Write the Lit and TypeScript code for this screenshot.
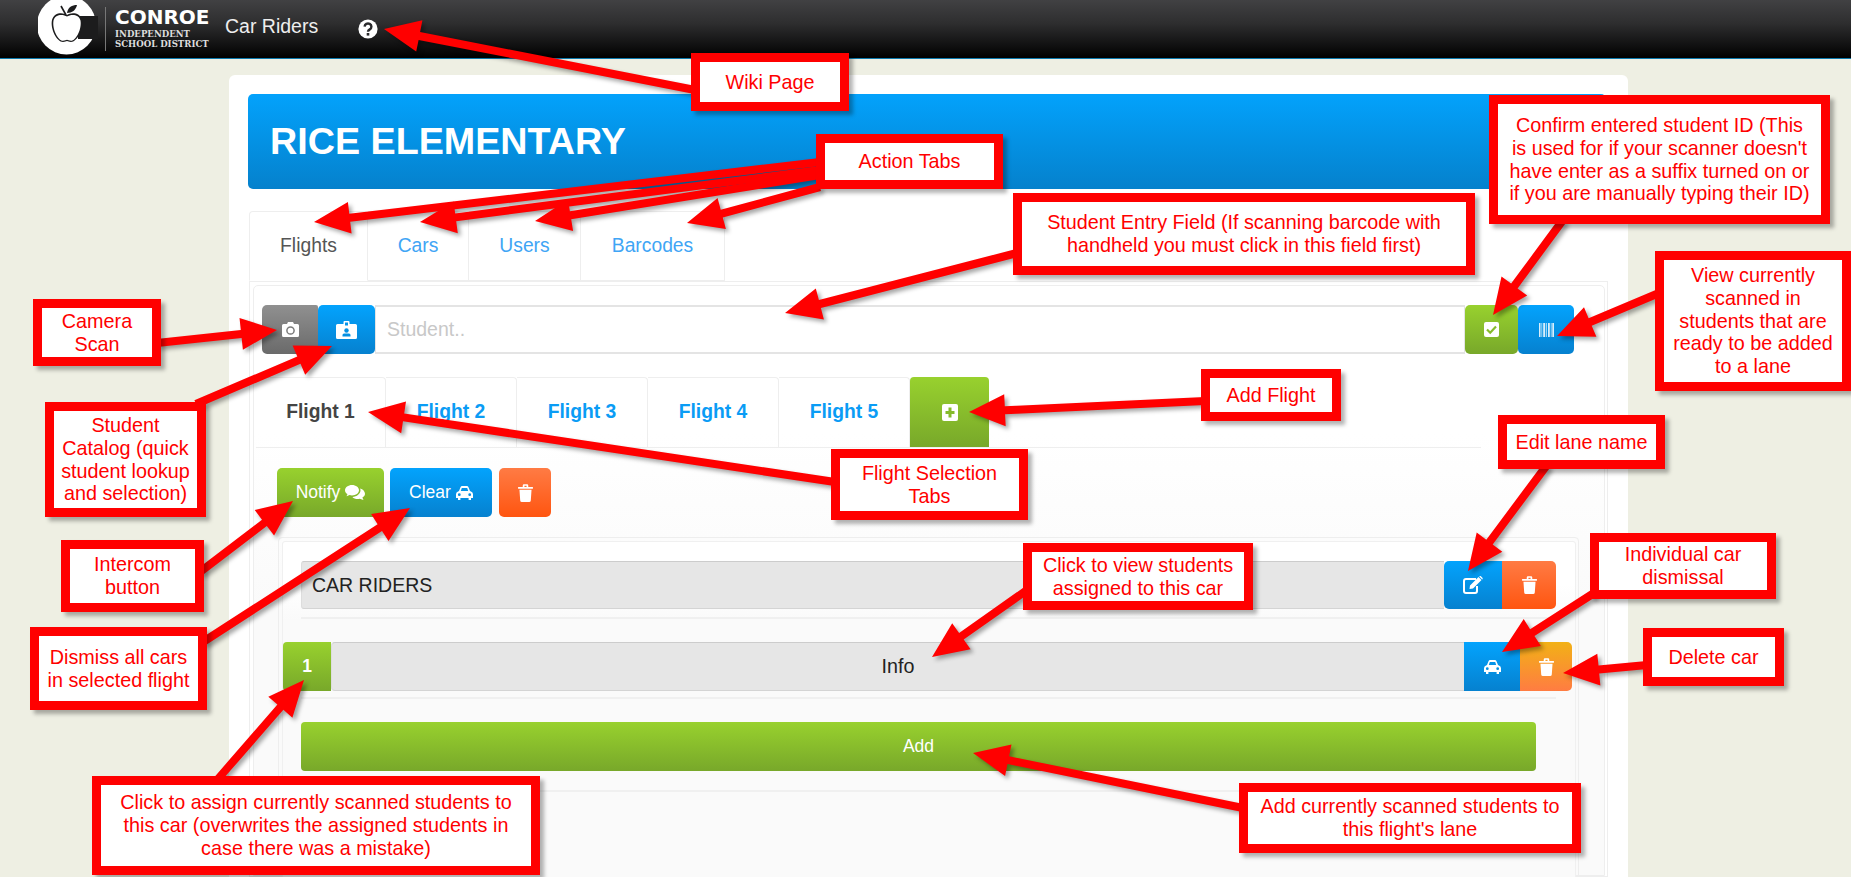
import { LitElement, html, css, svg } from "lit";
import { customElement } from "lit/decorators.js";

type Box = { x: number; y: number; r: number; b: number; lines: string[] };
const boxes: Box[] = [
  { x: 691, y: 53, r: 849, b: 111, lines: ["Wiki Page"] },
  { x: 816, y: 134, r: 1003, b: 189, lines: ["Action Tabs"] },
  { x: 1013, y: 193, r: 1475, b: 275, lines: ["Student Entry Field (If scanning barcode with", "handheld you must click in this field first)"] },
  { x: 1489, y: 95, r: 1830, b: 224, lines: ["Confirm entered student ID (This", "is used for if your scanner doesn't", "have enter as a suffix turned on or", "if you are manually typing their ID)"] },
  { x: 1655, y: 251, r: 1851, b: 391, lines: ["View currently", "scanned in", "students that are", "ready to be added", "to a lane"] },
  { x: 33, y: 299, r: 161, b: 366, lines: ["Camera", "Scan"] },
  { x: 45, y: 402, r: 206, b: 517, lines: ["Student", "Catalog (quick", "student lookup", "and selection)"] },
  { x: 61, y: 540, r: 204, b: 612, lines: ["Intercom", "button"] },
  { x: 30, y: 627, r: 207, b: 710, lines: ["Dismiss all cars", "in selected flight"] },
  { x: 92, y: 776, r: 540, b: 875, lines: ["Click to assign currently scanned students to", "this car (overwrites the assigned students in", "case there was a mistake)"] },
  { x: 831, y: 449, r: 1028, b: 520, lines: ["Flight Selection", "Tabs"] },
  { x: 1201, y: 369, r: 1341, b: 421, lines: ["Add Flight"] },
  { x: 1023, y: 543, r: 1253, b: 610, lines: ["Click to view students", "assigned to this car"] },
  { x: 1239, y: 783, r: 1581, b: 853, lines: ["Add currently scanned students to", "this flight's lane"] },
  { x: 1498, y: 415, r: 1665, b: 469, lines: ["Edit lane name"] },
  { x: 1590, y: 533, r: 1776, b: 599, lines: ["Individual car", "dismissal"] },
  { x: 1643, y: 628, r: 1784, b: 686, lines: ["Delete car"] },
];

const arrows: number[][] = [
  [695, 90, 384, 29],
  [820, 162, 314, 222],
  [820, 170, 420, 222],
  [820, 175, 535, 221],
  [820, 187, 687, 223],
  [1017, 253, 785, 313],
  [1563, 220, 1493, 315],
  [1659, 293, 1557, 336],
  [157, 343, 277, 330],
  [196, 404, 332, 346],
  [200, 572, 293, 501],
  [203, 642, 410, 508],
  [835, 482, 368, 412],
  [1205, 401, 969, 412],
  [1547, 465, 1468, 571],
  [1027, 590, 932, 657],
  [1594, 593, 1502, 652],
  [1647, 665, 1563, 673],
  [217, 780, 304, 680],
  [1243, 808, 973, 753],
];

function arrowPoints([x1, y1, x2, y2]: number[]) {
  const dx = x2 - x1, dy = y2 - y1;
  const len = Math.hypot(dx, dy);
  const ux = dx / len, uy = dy / len;
  const nx = -uy, ny = ux;
  const w = 4, W = 16, L = 36;
  const bx = x2 - ux * L, by = y2 - uy * L;
  const p = [
    [x1 + nx * w, y1 + ny * w],
    [bx + nx * w, by + ny * w],
    [bx + nx * W, by + ny * W],
    [x2, y2],
    [bx - nx * W, by - ny * W],
    [bx - nx * w, by - ny * w],
    [x1 - nx * w, y1 - ny * w],
  ];
  return p.map((q) => q[0].toFixed(1) + "," + q[1].toFixed(1)).join(" ");
}

const camera = html`<svg width="17" height="15" viewBox="0 0 17 15"><path fill="#fff" d="M5 2 6 0H11L12 2H15.5A1.5 1.5 0 0 1 17 3.5V13.5A1.5 1.5 0 0 1 15.5 15H1.5A1.5 1.5 0 0 1 0 13.5V3.5A1.5 1.5 0 0 1 1.5 2Z"/><circle cx="8.5" cy="8.5" r="3.6" fill="none" stroke="#7b7b7b" stroke-width="1.5"/></svg>`;
const idCard = html`<svg width="21" height="18" viewBox="0 0 21 18"><path fill="#fff" d="M1.5 3H7.5V1Q7.5 0 8.5 0H12.5Q13.5 0 13.5 1V3H19.5Q21 3 21 4.5V16.5Q21 18 19.5 18H1.5Q0 18 0 16.5V4.5Q0 3 1.5 3Z"/><rect x="9" y="1.5" width="3" height="3" fill="#0595ea"/><circle cx="10.5" cy="9.5" r="2.2" fill="#0590e2"/><path fill="#0590e2" d="M6.5 15.5V14Q6.5 12.5 8 12.5H13Q14.5 12.5 14.5 14V15.5Z"/></svg>`;
const checkSquare = html`<svg width="15" height="15" viewBox="0 0 15 15"><rect width="15" height="15" rx="2" fill="#fff"/><path d="M3 7.5 6.2 10.7 12 4.5" fill="none" stroke="#86bb2c" stroke-width="2.2"/></svg>`;
const barcode = html`<svg width="15" height="14" viewBox="0 0 15 14"><path fill="#fff" opacity="0.85" d="M0 0H1.5V14H0ZM2.5 0H3.2V14H2.5ZM4.2 0H6.2V14H4.2ZM7.2 0H7.9V14H7.2ZM9 0H10.8V14H9ZM11.8 0H12.5V14H11.8ZM13.3 0H15V14H13.3Z"/></svg>`;
const edit = html`<svg width="20" height="18" viewBox="0 0 20 18"><path fill="none" stroke="#fff" stroke-width="2" d="M13 3H3Q1 3 1 5V15Q1 17 3 17H12Q14 17 14 15V10"/><path fill="#fff" d="M7 9.5 15.5 1 18.5 4 10 12.5 6.5 13ZM16.5 0.2Q17.2-.3 17.9.3L19.4 1.8Q20 2.5 19.5 3.2L19.2 3.4 16.2.4Z"/></svg>`;
const trash = html`<svg width="15" height="18" viewBox="0 0 14 17"><path fill="#fff" d="M0 2.8H4.4V1.4Q4.4 .3 5.5 .3H8.5Q9.6 .3 9.6 1.4V2.8H14V4.4H0ZM6 1.6V2.8H8V1.6ZM1.3 5.4H12.7L12 15.5Q11.9 17 10.4 17H3.6Q2.1 17 2 15.5Z"/></svg>`;
const car = html`<svg width="17" height="14" viewBox="0 0 17 14"><path fill="#fff" fill-rule="evenodd" d="M3 5 4.5 1.2Q4.9 0 6.2 0H10.8Q12.1 0 12.5 1.2L14 5Q17 6 17 8V12H15V14H12.6V12H4.4V14H2V12H0V8Q0 6 3 5ZM4.8 5H12.2L11.2 2H5.8ZM3.3 7.3A1.4 1.4 0 1 0 3.3 10.1 1.4 1.4 0 1 0 3.3 7.3ZM13.7 7.3A1.4 1.4 0 1 0 13.7 10.1 1.4 1.4 0 1 0 13.7 7.3Z"/></svg>`;
const comments = html`<svg width="20" height="15" viewBox="0 0 20 15"><path fill="#fff" d="M7 0C3.2 0 0 2.3 0 5.2 0 6.8 1 8.2 2.5 9.1L1.5 11.3 4.6 10C5.4 10.3 6.2 10.4 7 10.4 10.9 10.4 14 8.1 14 5.2S10.9 0 7 0Z"/><path fill="#fff" d="M15.1 3.4C15.4 4 15.5 4.6 15.5 5.2 15.5 8.8 11.9 11.6 7.4 11.9 8.6 13.2 10.5 14 12.6 14 13.3 14 14 13.9 14.7 13.7L18.5 15 17.4 12.6C18.9 11.7 20 10.4 20 8.8 20 6.4 18 4.2 15.1 3.4Z"/></svg>`;
const plus = html`<svg width="16" height="17" viewBox="0 0 16 17"><rect width="16" height="17" rx="2" fill="#fff"/><path d="M8 3.5V13.5M3.5 8.5H12.5" stroke="#86bb2c" stroke-width="3"/></svg>`;
const help = html`<svg width="20" height="20" viewBox="0 0 20 20"><circle cx="10" cy="10" r="9.6" fill="#fff"/><path d="M6.6 7.6A3.4 3.2 0 1 1 11.8 10.4C10.6 11.1 10 11.6 10 12.8" fill="none" stroke="#2a2a2c" stroke-width="2.4"/><rect x="8.7" y="14" width="2.6" height="2.6" fill="#2a2a2c"/></svg>`;
const apple = html`<svg class="mark" width="60" height="58" viewBox="0 0 60 58">
  <circle cx="28.5" cy="27" r="29.5" fill="#fff"/>
  <rect x="40" y="18" width="20" height="23" fill="#1c1c1d"/>
  <path fill="#1c1c1d" d="M29 17C25 14 16 14 14 22 12 31 19 44 25 44 27 44 28 43 29 43 30 43 31 44 33 44 39 44 46 31 44 22 42 14 33 14 29 17Z"/>
  <path fill="#fff" d="M29 18.500C25 16 17 16 15.500 22.500 14 31 20 42.800 25 42.800 27 42.800 28 41.800 29 41.800 30 41.800 31 42.800 33 42.800 38 42.800 44 31 42.500 22.500 41 16 33 16 29 18.500Z"/>
  <path fill="none" stroke="#1c1c1d" stroke-width="1.6" d="M28 17 23 8"/>
  <path fill="#1c1c1d" d="M29 15C30 9 34 7 39 7 38 12 34 15 29 15Z"/>
</svg>`;

@customElement("app-root")
export class AppRoot extends LitElement {
  static styles = css`
    :host {
      display: block;
      position: relative;
      height: 877px;
      overflow: hidden;
      background: #eeefe3;
      font-family: "Liberation Sans", Arial, sans-serif;
      color: #333;
    }
    .topbar {
      height: 58px;
      border-bottom: 1px solid #0b79ad;
      background: linear-gradient(#414143 0%, #2e2e2f 40%, #000 100%);
      display: flex;
      align-items: center;
      padding-left: 38px;
      overflow: hidden;
    }
    .mark { flex: none; margin-top: -2px; align-self: flex-start; }
    .rule { width: 1px; height: 44px; background: #777; margin: 0 9px 0 7px; flex: none; }
    .word { width: 110px; flex: none; color: #e8e8e8; }
    .word b { display: block; font: bold 20px/17px "DejaVu Sans", sans-serif; color: #fff; margin-bottom: 3px; }
    .word span { display: block; font: bold 8.600px/10px "DejaVu Serif", serif; color: #ddd; }
    .app { color: #eee; font-size: 19.500px; margin-top: -6px; }
    .helpi { margin-left: 40px; display: flex; }
    .card {
      width: 1399px;
      margin: 16px 0 0 229px;
      background: #fff;
      border-radius: 6px 6px 0 0;
      padding-top: 19px;
      height: 802px;
      box-sizing: border-box;
    }
    .banner {
      margin-left: 19px;
      width: 1358px;
      height: 95px;
      box-sizing: border-box;
      padding-left: 22px;
      border-radius: 5px;
      display: flex;
      align-items: center;
      color: #fff;
      font-size: 37.700px;
      font-weight: bold;
      background: linear-gradient(#03a2fc, #0581cc);
    }
    .tabs { display: flex; margin: 22px 0 0 20px; height: 70px; }
    .tab {
      box-sizing: border-box;
      display: flex;
      align-items: center;
      justify-content: center;
      border: 1px solid #eee;
      border-left: 0;
      border-radius: 0 4px 0 0;
      font-size: 19.300px;
      color: #3fa5f5;
    }
    .tab.on { color: #555; border-left: 1px solid #eee; border-bottom-color: #fff; border-radius: 4px 4px 0 0; }
    .t1 { width: 119px; } .t2 { width: 101px; } .t3 { width: 112px; } .t4 { width: 144px; }
    .pane {
      margin-left: 20px;
      width: 1359px;
      height: 596px;
      box-sizing: border-box;
      border: 1px solid #eee;
      padding: 3px 2px 0 3px;
    }
    .well {
      height: 100%;
      box-sizing: border-box;
      border: 1px solid #eee;
      border-radius: 5px 5px 0 0;
      padding-top: 19px;
      background: linear-gradient(#fff 25%, #fafafa 55%);
    }
    .btn {
      display: flex;
      align-items: center;
      justify-content: center;
      gap: 5px;
      color: #fff;
      flex: none;
      font-size: 17.500px;
      box-sizing: border-box;
    }
    .blue { background: linear-gradient(#03a3fd, #0681cf); }
    .green { background: linear-gradient(#98d12e, #78a82a); }
    .grey { background: linear-gradient(#909090, #6a6a6a); }
    .orange { background: linear-gradient(#ff7b44, #ff5510); }
    .amber { background: linear-gradient(#f2b116, #ff7c42); }
    .entry { display: flex; height: 49px; margin-left: 8px; width: 1312px; }
    .w-cam { width: 56px; border-radius: 5px 2px 2px 5px; }
    .w-id { width: 57px; border-radius: 5px; }
    .student {
      flex: 1;
      min-width: 0;
      box-sizing: border-box;
      background: #fff;
      border: 1px solid #e4e4e4;
      border-width: 2px 1px;
      color: #c8c8c8;
      font-size: 19.500px;
      display: flex;
      align-items: center;
      padding-left: 11px;
    }
    .w-ok { width: 53px; border-radius: 5px; }
    .w-bar { width: 56px; border-radius: 5px; }
    .flights {
      display: flex;
      margin: 23px 0 0 2px;
      width: 1225px;
      height: 70px;
      border-bottom: 1px solid #eee;
      box-sizing: content-box;
    }
    .ft {
      box-sizing: border-box;
      display: flex;
      align-items: center;
      justify-content: center;
      border: 1px solid #eee;
      border-bottom: 0;
      border-left: 0;
      border-radius: 0 4px 0 0;
      padding-bottom: 2px;
      font-size: 19.300px;
      font-weight: bold;
      color: #0a9cf5;
      width: 131px;
    }
    .ft.on { color: #444; width: 130px; }
    .ft.add { width: 79px; border: 0; border-radius: 4px 4px 0 0; padding-bottom: 0; }
    .actions { display: flex; margin: 20px 0 0 23px; height: 49px; }
    .r5 { border-radius: 5px; }
    .w-notify { width: 107px; margin-right: 6px; }
    .w-clear { width: 102px; margin-right: 7px; }
    .w-del { width: 52px; }
    .lane {
      margin: 20px 0 0 24px;
      width: 1301px;
      height: 360px;
      box-sizing: border-box;
      border: 1px solid #eee;
      border-radius: 4px 4px 0 0;
      padding: 3px 2px 0 3px;
    }
    .laneIn {
      height: 100%;
      box-sizing: border-box;
      border: 1px solid #f0f0f0;
      border-radius: 3px 3px 0 0;
      background: linear-gradient(#fff 0, #fff 12%, #fafafa 22%);
      padding-top: 19px;
    }
    .row { display: flex; }
    .laneRow { margin-left: 18px; width: 1255px; height: 48px; }
    .bar {
      flex: 1;
      min-width: 0;
      box-sizing: border-box;
      background: #e6e6e6;
      border-top: 1px solid #ccc;
      border-bottom: 1px solid #d4d4d4;
      color: #222;
      font-size: 19.500px;
      display: flex;
      align-items: center;
    }
    .laneRow .bar { padding-left: 10px; border-left: 1px solid #ddd; border-radius: 3px 0 0 3px; }
    .w-edit { width: 58px; border-radius: 5px 0 0 5px; }
    .w-ldel { width: 54px; border-radius: 0 5px 5px 0; }
    .sep { height: 2px; background: #f0f0f0; margin-left: 18px; width: 1255px; }
    .s1 { margin-top: 8px; margin-bottom: 23px; }
    .carRow { width: 1289px; height: 49px; }
    .w-num { width: 48px; border-radius: 4px 0 0 4px; font-weight: bold; }
    .carRow .bar { justify-content: center; border-radius: 4px 0 0 4px; font-size: 19.700px; border-left: 1px solid #ddd; }
    .w-car { width: 56px; border-radius: 0; }
    .w-cdel { width: 52px; border-radius: 0 5px 5px 0; }
    .s2 { margin-top: 6px; margin-bottom: 23px; }
    .addBtn { margin-left: 18px; width: 1235px; height: 49px; border-radius: 4px; }
    .s3 { margin-top: 19px; }

    .overlay { position: absolute; left: 0; top: 0; width: 1851px; height: 877px; pointer-events: none; }
    .arrows { position: absolute; left: 0; top: 0; filter: drop-shadow(3px 3px 2px rgba(0, 0, 0, 0.35)); }
    .call {
      position: absolute;
      box-sizing: border-box;
      background: #fff;
      border: 9px solid #f00;
      box-shadow: 4px 4px 4px rgba(0, 0, 0, 0.3);
      color: #f00;
      font-size: 19.800px;
      line-height: 22.700px;
      text-align: center;
      display: flex;
      flex-direction: column;
      justify-content: center;
      white-space: nowrap;
    }
  `;

  render() {
    return html`
      <div class="topbar">
        ${apple}
        <div class="rule"></div>
        <div class="word"><b>CONROE</b><span>INDEPENDENT</span><span>SCHOOL DISTRICT</span></div>
        <div class="app">Car Riders</div>
        <div class="helpi">${help}</div>
      </div>
      <div class="card">
        <div class="banner">RICE ELEMENTARY</div>
        <div class="tabs">
          <div class="tab on t1">Flights</div>
          <div class="tab t2">Cars</div>
          <div class="tab t3">Users</div>
          <div class="tab t4">Barcodes</div>
        </div>
        <div class="pane"><div class="well">
          <div class="entry">
            <div class="btn grey w-cam">${camera}</div>
            <div class="btn blue w-id">${idCard}</div>
            <div class="student">Student..</div>
            <div class="btn green w-ok">${checkSquare}</div>
            <div class="btn blue w-bar">${barcode}</div>
          </div>
          <div class="flights">
            <div class="ft on">Flight 1</div>
            <div class="ft">Flight 2</div>
            <div class="ft">Flight 3</div>
            <div class="ft">Flight 4</div>
            <div class="ft">Flight 5</div>
            <div class="btn green ft add">${plus}</div>
          </div>
          <div class="actions">
            <div class="btn green r5 w-notify">Notify ${comments}</div>
            <div class="btn blue r5 w-clear">Clear ${car}</div>
            <div class="btn orange r5 w-del">${trash}</div>
          </div>
          <div class="lane"><div class="laneIn">
            <div class="row laneRow">
              <div class="bar">CAR RIDERS</div>
              <div class="btn blue w-edit">${edit}</div>
              <div class="btn orange w-ldel">${trash}</div>
            </div>
            <div class="sep s1"></div>
            <div class="row carRow">
              <div class="btn green w-num">1</div>
              <div class="bar">Info</div>
              <div class="btn blue w-car">${car}</div>
              <div class="btn amber w-cdel">${trash}</div>
            </div>
            <div class="sep s2"></div>
            <div class="btn green addBtn">Add</div>
            <div class="sep s3"></div>
          </div></div>
        </div></div>
      </div>
      <div class="overlay">
        <svg class="arrows" width="1851" height="877" viewBox="0 0 1851 877">
          ${arrows.map((a) => svg`<polygon fill="#f00" points="${arrowPoints(a)}"/>`)}
        </svg>
        ${boxes.map(
          (b) => html`<div class="call" style="left:${b.x}px;top:${b.y}px;width:${b.r - b.x}px;height:${b.b - b.y}px">
            ${b.lines.map((l) => html`<div>${l}</div>`)}
          </div>`
        )}
      </div>
    `;
  }
}
